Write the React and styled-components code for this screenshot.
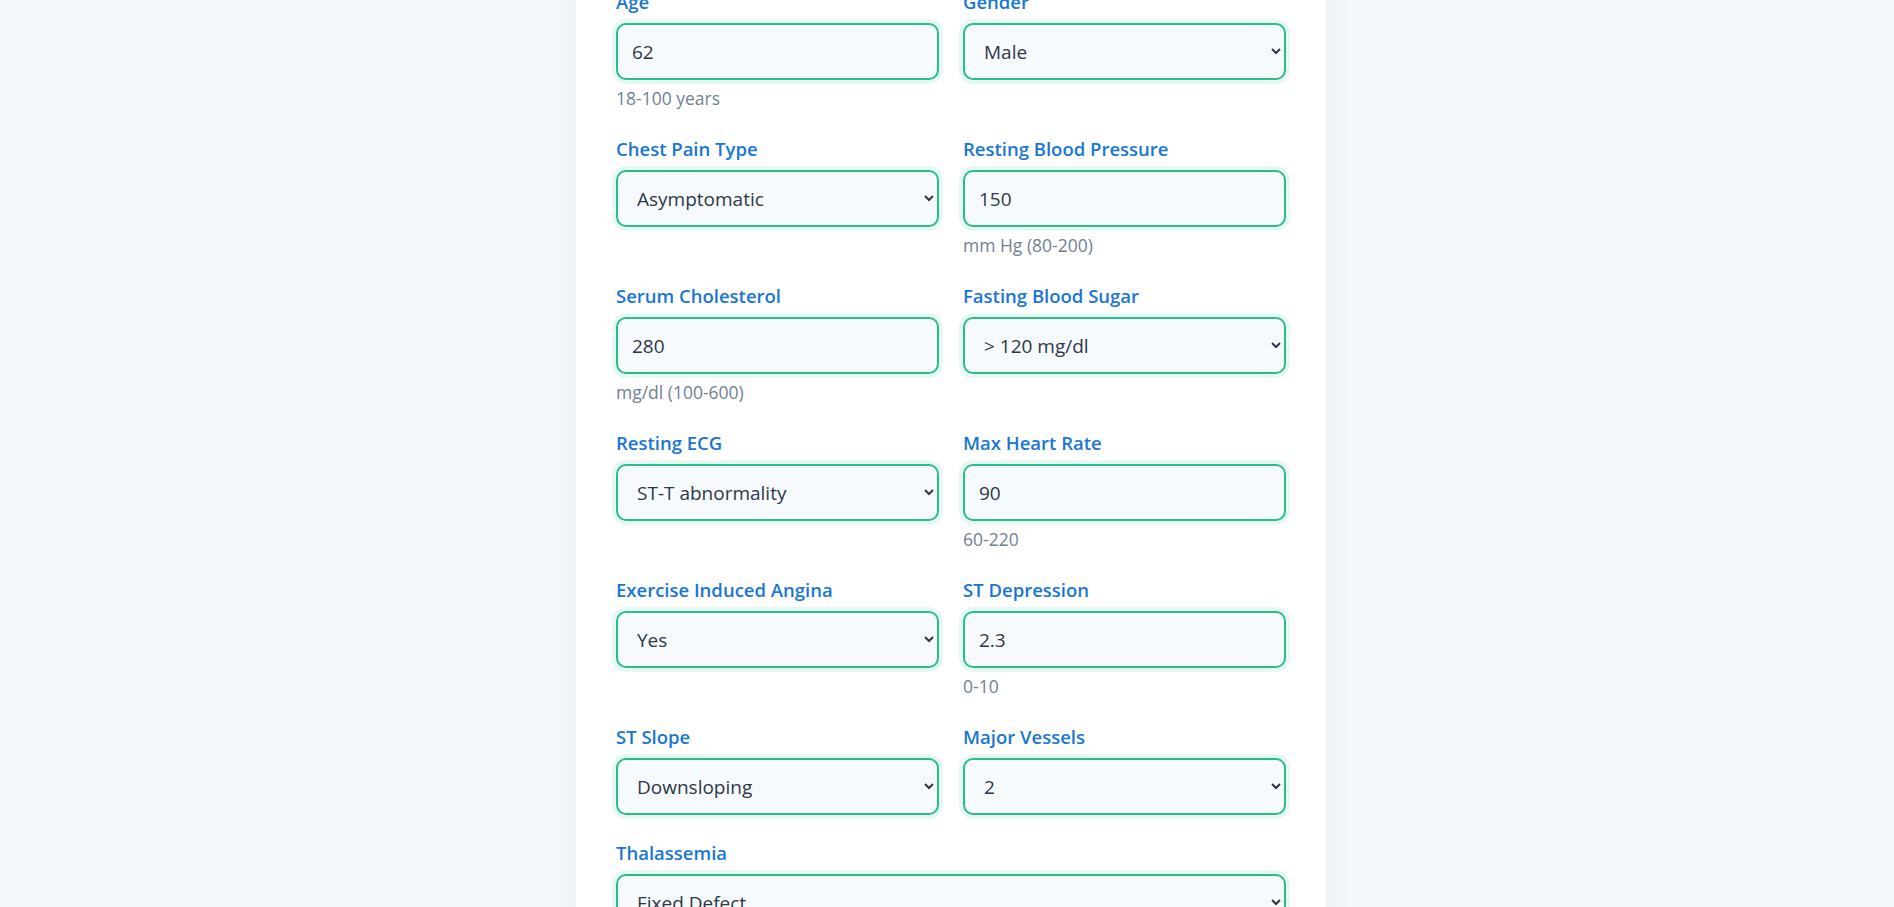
import React from 'react';
import styled, { createGlobalStyle } from 'styled-components';

const GlobalStyle = createGlobalStyle`
  html, body {
    margin: 0;
    padding: 0;
    background: #f5f9fc;
    font-family: 'Open Sans', 'Noto Sans', sans-serif;
    overflow: hidden;
  }
`;

const fields = [
  { label: 'Age', type: 'input', value: '62', hint: '18-100 years' },
  { label: 'Gender', type: 'select', value: 'Male', options: ['Male', 'Female'] },
  {
    label: 'Chest Pain Type',
    type: 'select',
    value: 'Asymptomatic',
    options: ['Typical Angina', 'Atypical Angina', 'Non-anginal Pain', 'Asymptomatic'],
  },
  { label: 'Resting Blood Pressure', type: 'input', value: '150', hint: 'mm Hg (80-200)' },
  { label: 'Serum Cholesterol', type: 'input', value: '280', hint: 'mg/dl (100-600)' },
  {
    label: 'Fasting Blood Sugar',
    type: 'select',
    value: '> 120 mg/dl',
    options: ['≤ 120 mg/dl', '> 120 mg/dl'],
  },
  {
    label: 'Resting ECG',
    type: 'select',
    value: 'ST-T abnormality',
    options: ['Normal', 'ST-T abnormality', 'LV hypertrophy'],
  },
  { label: 'Max Heart Rate', type: 'input', value: '90', hint: '60-220' },
  {
    label: 'Exercise Induced Angina',
    type: 'select',
    value: 'Yes',
    options: ['No', 'Yes'],
  },
  { label: 'ST Depression', type: 'input', value: '2.3', hint: '0-10' },
  {
    label: 'ST Slope',
    type: 'select',
    value: 'Downsloping',
    options: ['Upsloping', 'Flat', 'Downsloping'],
  },
  { label: 'Major Vessels', type: 'select', value: '2', options: ['0', '1', '2', '3'] },
  {
    label: 'Thalassemia',
    type: 'select',
    value: 'Fixed Defect',
    options: ['Normal', 'Fixed Defect', 'Reversible Defect'],
    wide: true,
  },
];

const Field = ({ field }) => (
  <FieldBox $wide={field.wide}>
    <Label>{field.label}</Label>
    {field.type === 'input' ? (
      <TextInput type='text' defaultValue={field.value} />
    ) : (
      <Select defaultValue={field.value}>
        {field.options.map((o) => (
          <option key={o} value={o}>
            {o}
          </option>
        ))}
      </Select>
    )}
    {field.hint && <Hint>{field.hint}</Hint>}
  </FieldBox>
);

export default function App() {
  return (
    <>
      <GlobalStyle />
      <Page>
        <Card>
          <FormGrid>
            {fields.map((f) => (
              <Field key={f.label} field={f} />
            ))}
          </FormGrid>
        </Card>
      </Page>
    </>
  );
}

const Page = styled.main`
  display: flex;
  justify-content: center;
  min-height: 100vh;
  margin-top: -52px;
  padding-left: 8px;
`;

const Card = styled.section`
  width: 750px;
  box-sizing: border-box;
  padding: 40px 40px 60px;
  background: #ffffff;
  box-shadow: 0 0 40px rgba(30, 70, 120, 0.07);
`;

const FormGrid = styled.div`
  display: grid;
  grid-template-columns: 1fr 1fr;
  column-gap: 24px;
  row-gap: 24px;
  align-items: start;
`;

const FieldBox = styled.div`
  display: flex;
  flex-direction: column;
  grid-column: ${(p) => (p.$wide ? '1 / -1' : 'auto')};
`;

const Label = styled.label`
  font-size: 18.5px;
  line-height: 27px;
  font-weight: 600;
  color: #1976d2;
  margin-bottom: 8px;
`;

const controlStyles = `
  box-sizing: border-box;
  width: 100%;
  height: 57px;
  border: 2px solid #28be88;
  border-radius: 10px;
  background-color: #f7fafc;
  box-shadow: 0 0 0 4px rgba(16, 185, 129, 0.1);
  color: #2d3748;
  font-family: 'Open Sans', 'Noto Sans', sans-serif;
  font-size: 19px;
  outline: none;
`;

const TextInput = styled.input`
  ${controlStyles}
  padding: 0 14px;
`;

const Select = styled.select`
  ${controlStyles}
  padding: 0 8px 0 15px;
`;

const Hint = styled.span`
  margin-top: 6px;
  font-size: 17.5px;
  line-height: 25px;
  color: #718096;
`;
